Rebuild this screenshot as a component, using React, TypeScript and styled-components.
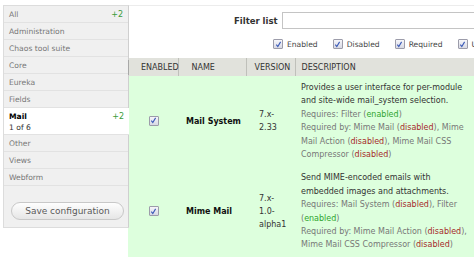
import * as React from 'react'
import styled, { createGlobalStyle } from 'styled-components'

const GlobalStyle = createGlobalStyle`
  html, body {
    margin: 0;
    padding: 0;
    background: #fff;
    overflow: hidden;
  }
  body {
    font-family: "DejaVu Sans", Verdana, sans-serif;
    font-size: 8px;
    color: #333;
  }
`

// Page layout: vertical tabs on the left, module list on the right
const Page = styled.div`
    display: flex;
    align-items: flex-start;
    width: 474px;
    height: 260px;
    padding-top: 5px;
    box-sizing: border-box;
`

const Sidebar = styled.div`
    position: relative;
    width: 126px;
    margin-left: 3px;
    background-color: #f0f0f0;
    border: 1px solid #dcdcdc;
    border-right-color: #cfcfcf;
    box-sizing: border-box;
`

const ScrollThumb = styled.div`
    position: absolute;
    right: -1px;
    top: 54px;
    width: 1px;
    height: 15px;
    background: #a8a8a8;
`

const TabList = styled.div`
    display: flex;
    flex-direction: column;
`

type TabProps = {
    selected?: boolean
}

const Tab = styled.div<TabProps>`
    display: flex;
    justify-content: space-between;
    align-items: ${props => (props.selected ? 'flex-start' : 'center')};
    height: ${props => (props.selected ? '23px' : '16px')};
    padding: ${props => (props.selected ? '3px 5px 0 5px' : '0 5px')};
    margin-right: ${props => (props.selected ? '-1px' : '0')};
    background-color: ${props => (props.selected ? '#fff' : 'transparent')};
    border-bottom: 1px solid #e2e2e2;
    color: ${props => (props.selected ? '#000' : '#777')};
    line-height: 11px;
    font-size: 7.6px;
`

const TabTitle = styled.div`
    display: flex;
    flex-direction: column;
`

const TabName = styled.span<TabProps>`
    font-weight: ${props => (props.selected ? 'bold' : 'normal')};
`

const TabSummary = styled.span`
    color: #333;
`

const TabCount = styled.span`
    color: #3a9c3a;
    font-size: 8px;
`

const Actions = styled.div`
    padding: 16px 5px 7px 7px;
`

const SaveButton = styled.button`
    width: 113px;
    height: 18px;
    padding: 0;
    border: 1px solid #c8c8c8;
    border-radius: 9px;
    background: linear-gradient(#fefefe, #e6e6e6);
    font-family: "DejaVu Sans", Verdana, sans-serif;
    font-size: 9px;
    color: #5a5a5a;
`

const Main = styled.div`
    flex: 1;
    min-width: 0;
    display: flex;
    flex-direction: column;
    border-top: 1px solid #ececec;
`

const FilterRow = styled.div`
    display: flex;
    align-items: center;
    padding: 6px 0 0 105px;
    white-space: nowrap;
`

const FilterLabel = styled.label`
    font-weight: bold;
    font-size: 8.5px;
    color: #333;
    margin-right: 4px;
`

const FilterInput = styled.div`
    flex: none;
    width: 240px;
    height: 15px;
    border: 1px solid #c4c4c4;
    background: #fff;
`

const StatusRow = styled.div`
    display: flex;
    align-items: center;
    gap: 15px;
    padding: 9px 0 0 144px;
    white-space: nowrap;
    height: 12px;
`

const StatusOption = styled.span`
    display: inline-flex;
    align-items: center;
    gap: 4px;
    color: #444;
    font-size: 7.6px;
`

const Box = styled.span`
    display: inline-flex;
    align-items: center;
    justify-content: center;
    width: 8px;
    height: 8px;
    border: 1px solid #9c9caa;
    border-radius: 1px;
    background: linear-gradient(#f6f6fa, #d8d9e4);
`

const Checkbox: React.FC = () => (
    <Box>
        <svg width="7" height="7" viewBox="0 0 7 7">
            <path d="M1.3 3.6 L2.8 5.6 L5.6 0.9" fill="none" stroke="#3a5ab8" strokeWidth="1.1" />
        </svg>
    </Box>
)

const Table = styled.table`
    margin-top: 8px;
    margin-left: -1px;
    width: calc(100% + 1px);
    border-collapse: collapse;
    table-layout: fixed;
`

type CellProps = {
    pad: number
    w?: number
}

const HeadCell = styled.th<CellProps>`
    box-sizing: border-box;
    width: ${props => (props.w ? props.w + 'px' : 'auto')};
    height: 18px;
    padding: 0 0 0 ${props => props.pad}px;
    background-color: #e1e2dc;
    border-left: 1px solid #bfc0ba;
    text-align: left;
    font-weight: normal;
    text-transform: uppercase;
    color: #333;
    font-size: 8px;

    &:first-child {
        border-left: none;
    }
`

const Row = styled.tr`
    background-color: #ddffdd;
`

const Cell = styled.td<CellProps>`
    box-sizing: border-box;
    padding: 5px 4px 5px ${props => props.pad}px;
    vertical-align: middle;
    line-height: 13.4px;
`

const CheckCell = styled.td`
    text-align: center;
    vertical-align: middle;
    padding: 0 0 0 1px;
`

const ModuleName = styled.span`
    font-weight: bold;
    color: #111;
`

const Line = styled.div`
    color: #333;
`

const Meta = styled.div`
    color: #777;
`

type StateProps = {
    on?: boolean
}

const State = styled.span<StateProps>`
    color: ${props => (props.on ? '#2fa52f' : '#a52a2a')};
`

const statuses = ['Enabled', 'Disabled', 'Required', 'Unavailable']

const tabs = [
    { name: 'All', count: '+2' },
    { name: 'Administration' },
    { name: 'Chaos tool suite' },
    { name: 'Core' },
    { name: 'Eureka' },
    { name: 'Fields' },
    { name: 'Mail', count: '+2', summary: '1 of 6', selected: true },
    { name: 'Other' },
    { name: 'Views' },
    { name: 'Webform' },
]

export default function App() {
    return (
        <>
            <GlobalStyle />
            <Page>
                <Sidebar>
                    <ScrollThumb />
                    <TabList>
                        {tabs.map(tab => (
                            <Tab key={tab.name} selected={tab.selected}>
                                <TabTitle>
                                    <TabName selected={tab.selected}>{tab.name}</TabName>
                                    {tab.summary && <TabSummary>{tab.summary}</TabSummary>}
                                </TabTitle>
                                {tab.count && <TabCount>{tab.count}</TabCount>}
                            </Tab>
                        ))}
                    </TabList>
                    <Actions>
                        <SaveButton>Save configuration</SaveButton>
                    </Actions>
                </Sidebar>

                <Main>
                    <FilterRow>
                        <FilterLabel>Filter list</FilterLabel>
                        <FilterInput />
                    </FilterRow>
                    <StatusRow>
                        {statuses.map(s => (
                            <StatusOption key={s}>
                                <Checkbox />
                                {s}
                            </StatusOption>
                        ))}
                    </StatusRow>

                    <Table>
                        <thead>
                            <tr>
                                <HeadCell pad={13} w={50}>Enabled</HeadCell>
                                <HeadCell pad={13} w={68}>Name</HeadCell>
                                <HeadCell pad={8} w={49}>Version</HeadCell>
                                <HeadCell pad={6}>Description</HeadCell>
                            </tr>
                        </thead>
                        <tbody>
                            <Row>
                                <CheckCell><Checkbox /></CheckCell>
                                <Cell pad={8}><ModuleName>Mail System</ModuleName></Cell>
                                <Cell pad={13}>7.x-<br />2.33</Cell>
                                <Cell pad={6}>
                                    <Line>Provides a user interface for per-module and site-wide mail_system selection.</Line>
                                    <Meta>Requires: Filter (<State on>enabled</State>)</Meta>
                                    <Meta>
                                        Required by: Mime Mail (<State>disabled</State>), Mime Mail Action (<State>disabled</State>), Mime Mail CSS Compressor (<State>disabled</State>)
                                    </Meta>
                                </Cell>
                            </Row>
                            <Row>
                                <CheckCell><Checkbox /></CheckCell>
                                <Cell pad={8}><ModuleName>Mime Mail</ModuleName></Cell>
                                <Cell pad={13}>7.x-<br />1.0-<br />alpha1</Cell>
                                <Cell pad={6}>
                                    <Line>Send MIME-encoded emails with embedded images and attachments.</Line>
                                    <Meta>Requires: Mail System (<State>disabled</State>), Filter (<State on>enabled</State>)</Meta>
                                    <Meta>
                                        Required by: Mime Mail Action (<State>disabled</State>), Mime Mail CSS Compressor (<State>disabled</State>)
                                    </Meta>
                                </Cell>
                            </Row>
                        </tbody>
                    </Table>
                </Main>
            </Page>
        </>
    )
}
